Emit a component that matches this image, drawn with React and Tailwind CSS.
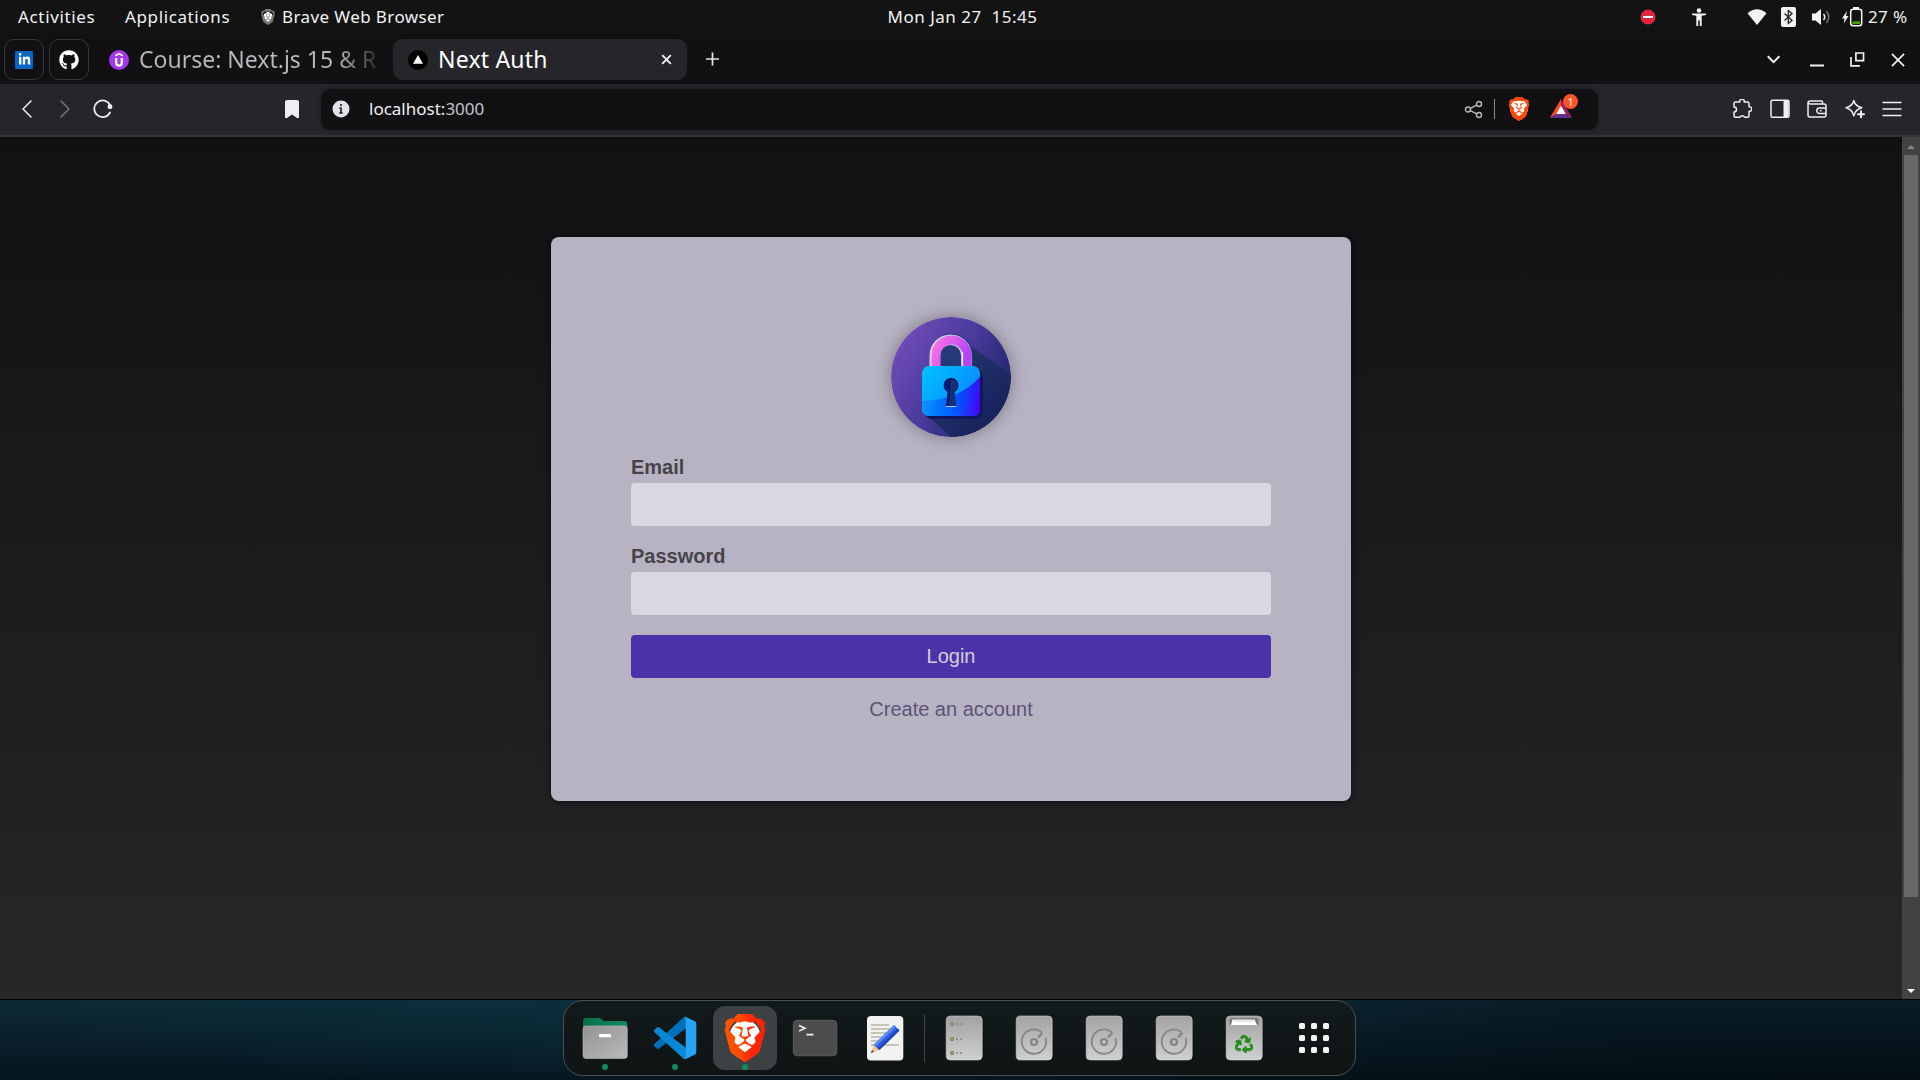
import React from "react";
import { SiBrave } from "react-icons/si";
import { FaGithub, FaRecycle, FaLinkedinIn } from "react-icons/fa";

const ui = "font-['Noto_Sans','Open_Sans',sans-serif]";

function TopBar() {
  return (
    <div className="flex h-[34px] shrink-0 items-center bg-[#131313] text-[17px] leading-[34px] text-[#f2f2f2]">
      <div className="grid flex-1 grid-cols-[107px_135px_22px_1fr] items-center pl-[18px]">
        <span className="tracking-[0.66px]">Activities</span>
        <span className="tracking-[0.62px]">Applications</span>
        <SiBrave className="size-4 bg-[radial-gradient(#fff_40%,transparent_45%)] text-[#77777a]" />
        <span className="tracking-[0.4px]">Brave Web Browser</span>
      </div>
      <div className="flex w-[154px] justify-start whitespace-pre pl-[2px] tracking-[0.5px]">Mon Jan 27  15:45</div>
      <div className="flex flex-1 items-center justify-end pr-[13px]">
        <svg className="mr-[35px] size-4" viewBox="0 0 16 16">
          <circle cx="8" cy="8" r="7.5" fill="#e0243c" />
          <rect x="3" y="7" width="10" height="2" fill="#fff" />
        </svg>
        <svg className="mr-10 h-[18px] w-4" viewBox="0 0 16 18" fill="#f2f2f2">
          <circle cx="8" cy="2.5" r="2.3" />
          <path d="M1 5.5h14v1.5l-4.3.8V18H8.8v-5.5H7.2V18H5.3V7.800L1 7z" />
        </svg>
        <svg className="mr-[14px] h-4 w-5" viewBox="0 0 20 16" fill="#f2f2f2">
          <path d="M0.500 4.200Q10-3.800 19.500 4.200L10 16z" />
        </svg>
        <svg className="mr-4 h-5 w-[15px]" viewBox="0 0 15 20">
          <rect width="15" height="20" rx="2" fill="#f2f2f2" />
          <path d="M3.500 6.500l7.500 7-3.700 3V3.500l3.700 3-7.500 7" fill="none" stroke="#222" strokeWidth="1.300" />
        </svg>
        <svg className="mr-[11px] h-[18px] w-[19px]" viewBox="0 0 19 18">
          <path d="M0 5.500h3.500L9 1v16l-5.500-4.500H0z" fill="#f2f2f2" />
          <path d="M11.500 6q2.500 3 0 6" stroke="#e8e8e8" strokeWidth="1.600" fill="none" />
          <path d="M14.300 3q5 6 0 12" stroke="#777" strokeWidth="1.500" fill="none" />
        </svg>
        <svg className="mr-[5px] h-5 w-[21px]" viewBox="0 0 21 20">
          <path d="M5 4L0 11.500h2.500L1.800 16.500 6.500 9H4z" fill="#f2f2f2" />
          <rect x="11" y="0" width="6" height="3" fill="#f2f2f2" />
          <rect x="8.700" y="2.300" width="11" height="16.500" rx="2.500" stroke="#f2f2f2" strokeWidth="1.500" fill="none" />
          <rect x="10.500" y="14.300" width="7.500" height="2.800" fill="#4e9a06" />
        </svg>
        <span className="w-[39px] whitespace-nowrap tracking-[0.4px]">27 %</span>
      </div>
    </div>
  );
}

function TabStrip() {
  return (
    <div className="flex h-[50px] shrink-0 items-center bg-[#111113] pb-0 pl-1 pr-[15px] pt-[1px]">
      <div className="mr-[5px] flex h-[41px] w-10 items-center justify-center rounded-[10px] border border-[#38383c]">
        <span className="flex size-[18px] items-center justify-center rounded-[1px] bg-[#0a66c2]">
          <FaLinkedinIn className="size-[13px] text-white" />
        </span>
      </div>
      <div className="flex h-[41px] w-10 items-center justify-center rounded-[10px] border border-[#38383c]">
        <FaGithub className="size-[20px] text-white" />
      </div>
      <div className="ml-5 flex w-[284px] items-center">
        <svg className="mr-[10px] size-5 shrink-0" viewBox="0 0 20 20">
          <circle cx="10" cy="10" r="10" fill="#a435f0" />
          <path d="M6.300 5.800L10 3.600l3.700 2.200" stroke="#fff" strokeWidth="1.600" fill="none" />
          <path d="M7.200 8v4.800q0 2.900 2.800 2.900t2.800-2.900V8" stroke="#fff" strokeWidth="2.200" fill="none" />
        </svg>
        <span className="w-[240px] whitespace-nowrap bg-gradient-to-r from-[#b9b9bd] from-[82%] to-transparent to-[103%] bg-clip-text pb-[2px] text-[23px] leading-[38px] text-transparent">
          Course: Next.js 15 &amp; R
        </span>
      </div>
      <div className="flex h-[41px] w-[294px] items-center rounded-[10px] bg-[#25252a] pl-[15px] pr-[15px]">
        <svg className="mr-[10px] size-5" viewBox="0 0 20 20">
          <circle cx="10" cy="10" r="10" fill="#000" />
          <path d="M10 5l5 8.800H5z" fill="#fff" />
        </svg>
        <span className="flex-1 pb-[2px] text-[23px] leading-[38px] tracking-[0.2px] text-white">Next Auth</span>
        <svg className="size-[11px]" viewBox="0 0 11 11">
          <path d="M1.200 1.200l8.600 8.600M9.800 1.200l-8.600 8.600" stroke="#f2f2f2" strokeWidth="1.900" />
        </svg>
      </div>
      <svg className="ml-[18px] size-[15px]" viewBox="0 0 15 15">
        <path d="M7.500 .5v13M1 7h13" stroke="#e8e8e8" strokeWidth="1.700" />
      </svg>
      <div className="flex-1" />
      <svg className="mr-[29px] h-[10px] w-[15px]" viewBox="0 0 15 10">
        <path d="M1.800 1.300l5.800 5.800 5.800-5.800" stroke="#f2f2f2" strokeWidth="2" fill="none" />
      </svg>
      <svg className="mr-[26px] size-[14px]" viewBox="0 0 14 14">
        <path d="M0 12.500h14" stroke="#f2f2f2" strokeWidth="2" />
      </svg>
      <svg className="mr-[26px] size-[15px]" viewBox="0 0 15 15">
        <path d="M5.900 1h7.600v7.600H5.900zM1 5v8.800h8.800" stroke="#f2f2f2" strokeWidth="1.700" fill="none" />
      </svg>
      <svg className="size-[14px]" viewBox="0 0 15 15">
        <path d="M1 1l13 13M14 1L1 14" stroke="#f2f2f2" strokeWidth="1.800" />
      </svg>
    </div>
  );
}

function ToolIcon({ className, children }) {
  return (
    <svg className={className} viewBox="0 0 20 20" fill="none" stroke="#f0f0f2" strokeWidth="1.500" strokeLinejoin="round" strokeLinecap="round">
      {children}
    </svg>
  );
}

function Toolbar() {
  return (
    <div className="flex h-[53px] shrink-0 items-center border-b-2 border-[#323237] bg-[#25252a] pb-px pl-[17px] pr-[18px]">
      <ToolIcon className="mr-[18px] size-5">
        <path d="M14 2L6 10l8 8" />
      </ToolIcon>
      <ToolIcon className="mr-[18px] size-5 opacity-40">
        <path d="M6 2l8 8-8 8" />
      </ToolIcon>
      <ToolIcon className="size-5">
        <path d="M17 13.500A8.300 8.300 0 1 1 17 6" strokeWidth="1.700" />
        <circle cx="17" cy="7.800" r="1.700" fill="#f0f0f2" />
      </ToolIcon>
      <svg className="ml-[171px] h-5 w-[16px]" viewBox="0 0 16 20">
        <path d="M3 1h10q2 0 2 2v16h-2l-5-3.500L3 19H1V3q0-2 2-2z" fill="#f0f0f2" />
      </svg>
      <div className="ml-[21px] mt-px flex h-[41px] w-[1277px] items-center rounded-[10px] bg-[#111113] pb-px pl-[11px] pr-[25px] shadow-[0_0_4px_rgba(0,0,0,0.35)]">
        <svg className="mr-[19px] size-[18px]" viewBox="0 0 18 18">
          <circle cx="9" cy="9" r="8.500" fill="#e2e2e9" />
          <path d="M9 4v2M7.300 8H9v5M7.200 13h3.600" stroke="#25252a" strokeWidth="1.700" fill="none" />
        </svg>
        <span className="flex-1 pb-px text-[17px] leading-[38px] text-[#f0f0f2]">
          localhost:<span className="text-[#c3c3cb]">3000</span>
        </span>
        <svg className="mr-[11px] size-[19px]" viewBox="0 0 19 19" fill="none" stroke="#b8b8bd" strokeWidth="1.400">
          <circle cx="4" cy="9.500" r="2.500" />
          <circle cx="15" cy="4" r="2.500" />
          <circle cx="15" cy="15" r="2.500" />
          <path d="M6.300 8.400l6.400-3.300M6.300 10.600l6.400 3.300" />
        </svg>
        <span className="mr-3 h-5 w-px bg-[#8a8a8e]" />
        <BraveLogo className="mr-[18px] size-[24px]" />
        <span className="relative h-6 w-[24px]">
          <svg className="size-6" viewBox="0 0 24 24">
            <path d="M12 2v8.500L7.500 17 .8 21z" fill="#ff4724" />
            <path d="M12 2l11.200 19-6.700-4L12 10.500z" fill="#9e1f63" />
            <path d="M.8 21l6.700-4h9l6.700 4z" fill="#662d91" />
            <path d="M12 8.700L16.800 17H7.200z" fill="#fff" />
          </svg>
          <span className="absolute -right-[5px] -top-[3px] flex size-[15px] items-center justify-center rounded-full bg-[#fb542b] text-[10px] leading-none text-white">
            1
          </span>
        </span>
      </div>
      <div className="flex-1" />
      <div className="flex items-center gap-[17.500px]">
        <ToolIcon className="size-5">
          <path d="M2 4.500q0-1.500 1.500-1.500h4.300a2.300 2.300 0 1 1 4.400 0h3.300q1.500 0 1.500 1.500v3.300a2.300 2.300 0 1 1 0 4.500v4q0 2-1.500 2h-3a2.400 2.400 0 0 0-4.500 0H3.500q-1.500 0-1.500-1.500v-3.700a2.500 2.500 0 0 0 0-5z" />
        </ToolIcon>
        <ToolIcon className="size-5">
          <rect x="1" y="1.300" width="18" height="17" rx="1.500" />
          <rect x="13.500" y="2" width="5" height="16" fill="#f0f0f2" stroke="none" />
        </ToolIcon>
        <ToolIcon className="size-5">
          <path d="M15.500 5V3q0-1-1-1h-11Q1 2 1 4v12q0 2 2 2h14q2 0 2-2V7q0-2-2-2H3.500Q1.500 5 1 3.500M19 9h-6.500a2.700 2.700 0 0 0 0 5.500H19M13.500 11.700h.5" />
        </ToolIcon>
        <ToolIcon className="size-5">
          <path d="M8.800 1.500q1.500 5.700 8 7.300-6.500 1.700-8 8-1.500-6.300-7.800-8 6.300-1.600 7.800-7.300z" />
          <path d="M16 12.300v6M13 15.300h6" strokeWidth="2" />
        </ToolIcon>
        <ToolIcon className="size-5">
          <path d="M1 3.500h18M1 10h18M1 16.500h18" />
        </ToolIcon>
      </div>
    </div>
  );
}

function BraveLogo({ className }) {
  return (
    <span className={`${className} flex bg-[radial-gradient(ellipse_38%_42%_at_50%_47%,#fff_95%,transparent_100%)]`}>
      <SiBrave className="h-full w-full text-[#ff4a0c]" />
    </span>
  );
}

function LockIcon() {
  return (
    <svg className="size-[120px] rounded-full shadow-[0_0_16px_rgba(0,0,0,0.35)]" viewBox="0 0 120 120">
      <defs>
        <linearGradient id="disc" x1="0" y1="0.2" x2="1" y2="0.8">
          <stop offset="0" stopColor="#754dba" />
          <stop offset="0.5" stopColor="#47399a" />
          <stop offset="1" stopColor="#17205f" />
        </linearGradient>
        <linearGradient id="shackle" x1="0" y1="0" x2="1" y2="0.5">
          <stop offset="0" stopColor="#f873e4" />
          <stop offset="1" stopColor="#b445f5" />
        </linearGradient>
        <linearGradient id="body" x1="0" y1="0" x2="1" y2="0.6">
          <stop offset="0" stopColor="#00c3ff" />
          <stop offset="1" stopColor="#0a86ff" />
        </linearGradient>
        <linearGradient id="wave" x1="0" y1="0" x2="1" y2="0">
          <stop offset="0" stopColor="#0a94ff" />
          <stop offset="0.6" stopColor="#0055ff" />
          <stop offset="1" stopColor="#3510f5" />
        </linearGradient>
        <linearGradient id="corner" x1="0" y1="0" x2="1" y2="0">
          <stop offset="0" stopColor="#0068ff" />
          <stop offset="1" stopColor="#4400f5" />
        </linearGradient>
        <linearGradient id="cast" x1="0" y1="0" x2="1" y2="1">
          <stop offset="0" stopColor="#243c70" />
          <stop offset="1" stopColor="#151b58" />
        </linearGradient>
        <clipPath id="round"><circle cx="60" cy="60" r="60" /></clipPath>
        <clipPath id="case"><rect x="31" y="49" width="58" height="50" rx="7" /></clipPath>
      </defs>
      <g clipPath="url(#round)">
        <rect width="120" height="120" fill="url(#disc)" />
        <path d="M77 27L125 62v60H63L34 97z" fill="url(#cast)" />
        <path d="M39 50V38a21 21 0 0 1 43 0v12z" fill="#243b78" />
        <rect x="34" y="52" width="58" height="50" rx="7" fill="#11175a" />
        <path d="M43.800 51V38.500a15.800 15.800 0 0 1 31.600 0V51" fill="none" stroke="#d9d2f0" strokeWidth="10.500" />
        <path d="M45 51V38.500a15.300 15.300 0 0 1 31 0V51" fill="none" stroke="url(#shackle)" strokeWidth="9" />
        <path d="M71.500 35v15" stroke="#f4e6ff" strokeWidth="1.200" />
        <g clipPath="url(#case)">
          <rect x="31" y="49" width="58" height="50" fill="url(#body)" />
          <path d="M31 84Q68 83 89 60v40H31z" fill="url(#wave)" />
          <path d="M61 99Q80 93 89 75v25z" fill="url(#corner)" />
        </g>
        <path d="M55 89.500l1.500-14.500a7.500 7.500 0 1 1 7 0L65 89.500z" fill="#001a70" />
        <path d="M60 62a6.500 6.500 0 0 1 3 12l1.500 15H58z" fill="#17306f" />
        <path d="M55 89.500h10" stroke="#b8cbe8" strokeWidth="1.200" />
      </g>
    </svg>
  );
}

function LoginPage() {
  return (
    <div className="flex h-[862px] shrink-0 font-['Liberation_Sans',Arial,sans-serif]">
      <div className="flex flex-1 justify-center bg-gradient-to-b from-[#111113] to-[#272729] pt-[100px]">
        <form className="flex h-[564px] w-[800px] flex-col rounded-[8px] bg-[#b8b3c3] p-[80px] text-[20px] leading-[23px] shadow-[0_1px_8px_rgba(0,0,0,0.6)]">
          <div className="mb-[19px] flex justify-center"><LockIcon /></div>
          <label className="mb-1 font-bold text-[#464349]">Email</label>
          <input className="mb-[19px] h-[43px] rounded-[4px] bg-[#d9d7e1]" />
          <label className="mb-1 font-bold text-[#464349]">Password</label>
          <input className="mb-5 h-[43px] rounded-[4px] bg-[#d9d7e1]" />
          <button type="button" className="mb-5 h-[43px] rounded-[4px] bg-[#4a33a8] text-[#d2cfdc]">Login</button>
          <a className="text-center text-[#5a5478]">Create an account</a>
        </form>
      </div>
      <div className="flex w-[18px] flex-col items-center bg-[#424242]">
        <div className="flex h-[18px] items-center pt-[2px]">
          <svg className="h-1 w-2" viewBox="0 0 8 4"><path d="M0 4l4-4 4 4z" fill="#868686" /></svg>
        </div>
        <div className="h-[742px] w-[14px] bg-[#686868]" />
        <div className="flex-1" />
        <div className="flex h-[16px] items-center">
          <svg className="h-1 w-2" viewBox="0 0 8 4"><path d="M0 0h8L4 4z" fill="#fff" /></svg>
        </div>
      </div>
    </div>
  );
}

function DockTile({ running, active, children }) {
  return (
    <div className={`relative size-16 rounded-[12px] ${active ? "bg-[#3c4143]" : ""}`}>
      <svg className="size-16" viewBox="0 0 64 64">{children}</svg>
      {running && <span className="absolute left-[29px] top-[58px] size-[6px] rounded-full bg-[#0f8c60]" />}
    </div>
  );
}

function Plate() {
  return <rect x="14.200" y="10" width="36" height="44" rx="4" fill="url(#plate)" stroke="#cfcfcf" strokeWidth="0.600" />;
}

function DiskTile() {
  return (
    <DockTile>
      <Plate />
      <g fill="none" stroke="#858585">
        <path d="M39.500 26A12.200 12.200 0 1 0 43.600 32" strokeWidth="1.800" />
        <circle cx="32" cy="36" r="3" strokeWidth="2.200" />
        <path d="M36 31.500l4.500-4.800" strokeWidth="2.400" />
      </g>
    </DockTile>
  );
}

function Dock() {
  return (
    <div className="flex h-[81px] shrink-0 items-start border-t border-black bg-[linear-gradient(to_right,transparent_45%,rgba(2,6,10,0.4)_85%),radial-gradient(ellipse_40%_120%_at_40%_0%,rgba(8,52,66,0.6)_0%,transparent_100%),linear-gradient(to_bottom,#0e2a37,#05151e)] pl-[563px]">
      <div className="flex h-[76px] items-center gap-[6px] rounded-[20px] border border-[#4b4f51] bg-gradient-to-b from-[#111a1c] to-[#101415] px-[9px]">
        <DockTile running>
          <defs>
            <linearGradient id="plate" x1="0" y1="0" x2="0" y2="1"><stop stopColor="#a2a2a2" /><stop offset="1" stopColor="#d0d0d0" /></linearGradient>
            <linearGradient id="folder" x1="0" y1="0" x2="1" y2="1"><stop stopColor="#939393" /><stop offset="1" stopColor="#bababa" /></linearGradient>
            <linearGradient id="tabfill" x1="0" y1="0" x2="1" y2="0"><stop stopColor="#087048" /><stop offset="1" stopColor="#178a63" /></linearGradient>
          </defs>
          <path d="M10 24V15q0-3 3-3h13.500q1.500 0 2.500 1.500t2.500 1.500H51q3.300 0 3.300 3v6z" fill="url(#tabfill)" />
          <rect x="10" y="20" width="44.300" height="32.500" rx="3" fill="url(#folder)" stroke="#bdbdbd" strokeWidth="0.600" />
          <rect x="26" y="28" width="12" height="3.200" rx="1" fill="#fff" />
        </DockTile>
        <DockTile running>
          <g transform="translate(11 10.800) scale(.423)">
            <path d="M96.461 10.796L75.857.876A6.230 6.230 0 0 0 68.750 2.083L1.299 63.583a4.167 4.167 0 0 0 .004 6.162l5.510 5.009a4.167 4.167 0 0 0 5.321.236L93.361 13.370c2.725-2.067 6.639-.124 6.639 3.297v-.240a6.250 6.250 0 0 0-3.539-5.631z" fill="#0070b8" />
            <path d="M96.461 89.204l-20.604 9.920a6.230 6.230 0 0 1-7.107-1.207L1.299 36.417a4.167 4.167 0 0 1 .004-6.162l5.510-5.009a4.167 4.167 0 0 1 5.321-.236l81.227 61.620c2.725 2.067 6.639.124 6.639-3.297v.240a6.250 6.250 0 0 1-3.539 5.631z" fill="#0a88d8" />
            <path d="M75.858 99.126a6.230 6.230 0 0 1-7.108-1.209C71.056 100.223 75 98.590 75 95.328V4.672C75 1.410 71.056-.223 68.750 2.083A6.230 6.230 0 0 1 75.858.874l20.601 9.907A6.250 6.250 0 0 1 100 16.413v67.174a6.250 6.250 0 0 1-3.541 5.633z" fill="#25a5f3" />
          </g>
        </DockTile>
        <DockTile running active>
          <defs>
            <linearGradient id="lion" x1="0" y1="0" x2="1" y2="0"><stop stopColor="#ff5500" /><stop offset="0.400" stopColor="#ff4800" /><stop offset="0.600" stopColor="#ff2a0a" /><stop offset="1" stopColor="#ff2000" /></linearGradient>
          </defs>
          <ellipse cx="32" cy="31" rx="15.500" ry="17" fill="#fff" />
          <SiBrave size={48} x="8" y="8" fill="url(#lion)" />
        </DockTile>
        <DockTile>
          <rect x="10.300" y="14.300" width="43.500" height="35.500" rx="4" fill="#4c4c4c" stroke="#666" strokeWidth="0.800" />
          <path d="M16 19.500l6 2.800-6 2.800M23.500 28.600h7" fill="none" stroke="#eee" strokeWidth="1.600" />
        </DockTile>
        <DockTile>
          <rect x="14" y="10" width="36.300" height="44.500" rx="4" fill="#f2f2f2" />
          <path d="M18 19h18M18 23h22M18 27h20M18 31h14M18 35h12M18 39h28" stroke="#c9c5b5" strokeWidth="1.800" />
          <path d="M18 47l2.500-8 6 5z" fill="#f9c08a" />
          <path d="M18 47l.9-3 2.200 1.800z" fill="#444" />
          <path d="M20.500 39L41 19l5.500 5.500-20 19.500z" fill="#2f5fe0" />
          <path d="M20.500 39L41 19l2 1.800-20.500 20z" fill="#5a8bf5" />
          <path d="M24.500 42.500l20.300-20 1.700 2-20 19.500z" fill="#2344b8" />
        </DockTile>
        <span className="mx-px h-12 w-px bg-[#3f4547]" />
        <DockTile>
          <Plate />
          <g fill="#8a8a8a">
            {[18, 33, 47].map((y) => (
              <g key={y}>
                <circle cx="20" cy={y} r="1.700" fill="#8fb55a" stroke="#77806c" />
                <circle cx="25" cy={y} r="1.100" />
                <circle cx="29" cy={y} r="1.100" />
              </g>
            ))}
          </g>
        </DockTile>
        <DiskTile />
        <DiskTile />
        <DiskTile />
        <DockTile>
          <Plate />
          <path d="M17.500 18.500v-4q0-2.500 3-2.500h23q3 0 3 2.500v4z" fill="#777" />
          <path d="M19 19l1.500-5.500h22L45 19z" fill="#fff" />
          <path d="M22 15h20" stroke="#bbb" strokeWidth="0.700" />
          <FaRecycle size={18} x="23" y="29" fill="#228a1c" stroke="#228a1c" strokeWidth="22" />
        </DockTile>
        <DockTile>
          {[17, 29, 41].map((y) => [17, 29, 41].map((x) => (
            <rect key={`${x}-${y}`} x={x} y={y} width="6" height="6" rx="1.500" fill="#f4f4f2" />
          )))}
        </DockTile>
      </div>
    </div>
  );
}

export default function App() {
  return (
    <div className={`flex h-[1080px] w-[1920px] flex-col overflow-hidden bg-[#111113] ${ui}`}>
      <TopBar />
      <TabStrip />
      <Toolbar />
      <LoginPage />
      <Dock />
    </div>
  );
}
